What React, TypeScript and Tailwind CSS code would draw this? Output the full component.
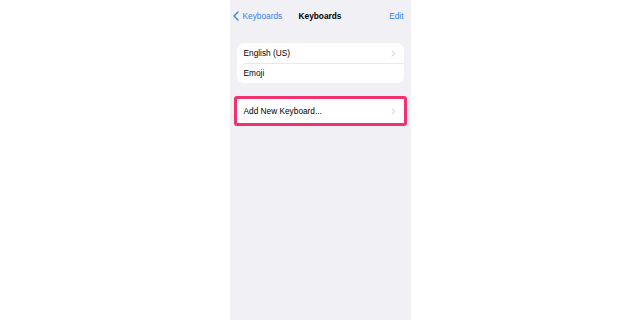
import React from "react";

const Chevron = () => (
  <svg width="5" height="7" viewBox="0 0 5 7" className="shrink-0">
    <path d="M1 0.8 L3.8 3.5 L1 6.2" fill="none" stroke="#c4c4c9" strokeWidth="0.9" strokeLinecap="round" strokeLinejoin="round" />
  </svg>
);

export default function App() {
  return (
    <div className="w-[640px] h-[320px] bg-white flex justify-center" style={{ fontFamily: "'Liberation Sans', Arial, sans-serif" }}>
      <div className="w-[181px] h-full bg-[#f0f0f5] flex flex-col">
        <div className="h-[32px] relative flex items-center pl-[3px] text-[8.3px]">
          <div className="flex items-center gap-[4px] text-[#3a80f0]">
            <svg width="6" height="10" viewBox="0 0 6 10">
              <path d="M5 1 L1 5 L5 9" fill="none" stroke="#3a80f0" strokeWidth="1.4" strokeLinecap="round" strokeLinejoin="round" />
            </svg>
            <span>Keyboards</span>
          </div>
          <div className="absolute left-0 right-0 text-center font-bold text-black pointer-events-none">Keyboards</div>
          <div className="ml-auto mr-[7px] text-[#3a80f0]">Edit</div>
        </div>
        <div className="mt-[11px] mx-[7px] bg-white rounded-[7px] text-[8.3px] text-black">
          <div className="h-[20px] flex items-center pl-[7px] pr-[8px] justify-between">
            <span>English (US)</span>
            <Chevron />
          </div>
          <div className="ml-[7px] h-px bg-[#e8e8ee]" />
          <div className="h-[19px] flex items-center pl-[7px]">
            <span>Emoji</span>
          </div>
        </div>
        <div className="mt-[13px] mx-[4px] border-[3px] border-[#f0336f] rounded-[3px] bg-white">
          <div className="h-[24px] flex items-center pl-[7px] pr-[8px] justify-between text-[8.3px] text-black">
            <span>Add New Keyboard...</span>
            <Chevron />
          </div>
        </div>
      </div>
    </div>
  );
}
